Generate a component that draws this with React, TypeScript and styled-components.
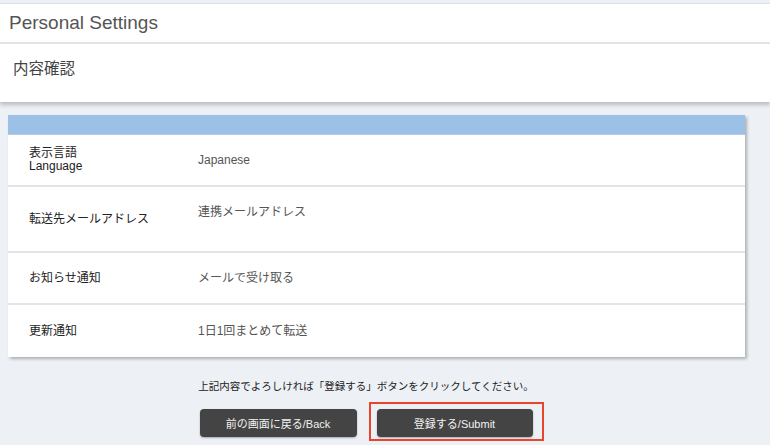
import React from "react";
import styled, { createGlobalStyle } from "styled-components";

const Global = createGlobalStyle`
  html, body { margin: 0; padding: 0; background: #edf1f6; }
  body { font-family: "Liberation Sans", "Noto Sans CJK JP", sans-serif; color: #333; }
`;

const Page = styled.div`
  width: 770px;
  height: 445px;
  overflow: hidden;
  background: #edf1f6;
  padding-top: 3px;
  box-sizing: border-box;
`;

const HeaderPanel = styled.header`
  background: #fff;
  border-top: 1px solid #dde2e8;
  box-shadow: 0 3px 4px rgba(0, 0, 0, 0.22);
`;

const TitleBar = styled.h1`
  margin: 0;
  height: 38px;
  display: flex;
  align-items: center;
  padding-left: 9px;
  font-size: 19px;
  font-weight: normal;
  color: #555;
  border-bottom: 2px solid #e3e4e6;
`;

const SubTitle = styled.h2`
  margin: 0;
  height: 58px;
  box-sizing: border-box;
  padding: 12px 0 0 13px;
  font-size: 15.5px;
  font-weight: normal;
  color: #444;
`;

const Card = styled.section`
  margin: 13px 25px 0 8px;
  background: #fff;
  box-shadow: 2px 2px 3px rgba(0, 0, 0, 0.28);
`;

const CardHead = styled.div`
  height: 19px;
  background: #9cc1e6;
  border-bottom: 1px solid #b3cfec;
`;

const Row = styled.div<{ $h: number; $last?: boolean }>`
  display: grid;
  grid-template-columns: 169px 1fr;
  align-items: center;
  height: ${(p) => p.$h}px;
  padding-left: 21px;
  box-sizing: border-box;
  border-bottom: ${(p) => (p.$last ? "none" : "2px solid #e4e4e4")};
  font-size: 12px;
  line-height: 13px;
`;

const Label = styled.div`
  color: #222;
`;

const Value = styled.div<{ $raise?: number }>`
  color: #555;
  padding-bottom: ${(p) => p.$raise ?? 0}px;
`;

const Footer = styled.div`
  width: 732px;
  display: flex;
  flex-direction: column;
  align-items: center;
  margin-top: 21px;
`;

const Message = styled.p`
  margin: 0;
  font-size: 10.5px;
  line-height: 16px;
  color: #222;
`;

const Buttons = styled.div`
  display: flex;
  gap: 20px;
  margin-top: 15px;
`;

const Button = styled.button<{ $w: number; $highlight?: boolean }>`
  position: relative;
  width: ${(p) => p.$w}px;
  height: 28px;
  border: none;
  border-radius: 4px;
  background: #444;
  color: #f2f2f2;
  font-family: "Liberation Sans", "Noto Sans CJK JP", sans-serif;
  font-size: 11px;
  box-shadow: 0 1px 2px rgba(0, 0, 0, 0.3);
  padding: 0;
  cursor: pointer;

  &::after {
    content: "";
    display: ${(p) => (p.$highlight ? "block" : "none")};
    position: absolute;
    top: -7px;
    left: -8px;
    right: -11px;
    bottom: -4px;
    border: 2px solid #e8452c;
    pointer-events: none;
  }
`;

const rows = [
  { label: ["表示言語", "Language"], value: "Japanese", h: 52 },
  { label: ["転送先メールアドレス"], value: "連携メールアドレス", h: 66, raise: 14 },
  { label: ["お知らせ通知"], value: "メールで受け取る", h: 52 },
  { label: ["更新通知"], value: "1日1回まとめて転送", h: 52 },
];

export default function App() {
  return (
    <Page>
      <Global />
      <HeaderPanel>
        <TitleBar>Personal Settings</TitleBar>
        <SubTitle>内容確認</SubTitle>
      </HeaderPanel>
      <Card>
        <CardHead />
        {rows.map((r, i) => (
          <Row key={i} $h={r.h} $last={i === rows.length - 1}>
            <Label>
              {r.label.map((l, j) => (
                <div key={j}>{l}</div>
              ))}
            </Label>
            <Value $raise={r.raise}>{r.value}</Value>
          </Row>
        ))}
      </Card>
      <Footer>
        <Message>上記内容でよろしければ「登録する」ボタンをクリックしてください。</Message>
        <Buttons>
          <Button $w={157}>前の画面に戻る/Back</Button>
          <Button $w={156} $highlight>
            登録する/Submit
          </Button>
        </Buttons>
      </Footer>
    </Page>
  );
}
